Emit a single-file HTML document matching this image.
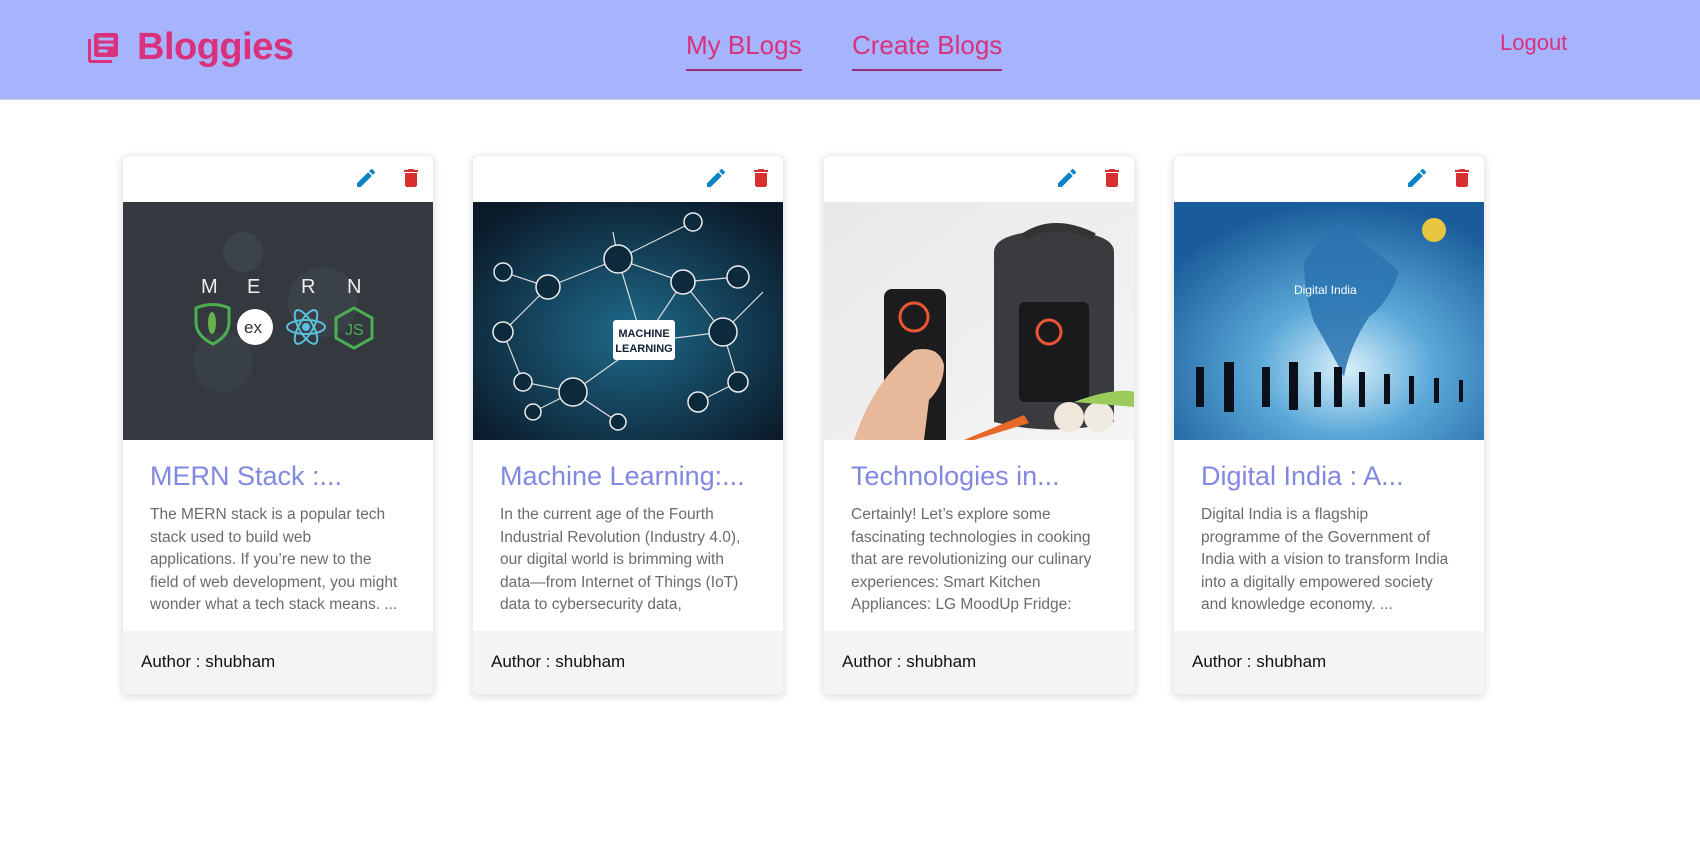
<!DOCTYPE html>
<html><head><meta charset="utf-8"><style>
*{box-sizing:border-box;margin:0;padding:0}
body{width:1700px;height:857px;background:#fff;font-family:"Liberation Sans",sans-serif;position:relative;overflow:hidden}
.hdr{position:absolute;left:0;top:0;width:1700px;height:100px;background:#a5b4fc;border-bottom:1px solid #c9cfe8}
.logo{position:absolute;left:85px;top:30px}
.brand{position:absolute;left:137px;top:26px;font-size:38px;font-weight:bold;color:#d9317d;letter-spacing:-0.5px}
.nav{position:absolute;top:30px;font-size:26px;color:#d9317d;padding-bottom:8px;border-bottom:2px solid #9b2e7a}
.logout{position:absolute;left:1500px;top:30px;font-size:22px;color:#d9317d}
.card{position:absolute;top:155px;width:312px;height:540px;border-radius:6px;background:#fff;box-shadow:0 2px 8px rgba(0,0,0,.15);border:1px solid #eee;overflow:hidden}
.icons{height:42px;position:relative}
.img{position:absolute;top:46px;left:0;width:312px;height:238px;overflow:hidden}
.title{position:absolute;left:27px;top:305px;font-size:27px;color:#8088e0;white-space:nowrap}
.body{position:absolute;left:27px;top:348px;width:248px;font-size:15.5px;line-height:22.5px;color:#6b6b6b;height:112px;overflow:hidden}
.foot{position:absolute;left:0;top:475px;width:312px;height:65px;background:#f3f4f6;font-size:17px;color:#111;padding:21px 0 0 18px}
</style></head><body>
<div class="hdr">
<svg class="logo" width="36" height="36" viewBox="0 0 24 24" fill="#d9317d"><path d="M4 6H2v14c0 1.1.9 2 2 2h14v-2H4V6zm16-4H8c-1.1 0-2 .9-2 2v12c0 1.1.9 2 2 2h12c1.1 0 2-.9 2-2V4c0-1.1-.9-2-2-2zm-1 9H9V9h10v2zm-4 4H9v-2h6v2zm4-8H9V5h10v2z"/></svg>
<div class="brand">Bloggies</div>
<div class="nav" style="left:686px">My BLogs</div>
<div class="nav" style="left:852px">Create Blogs</div>
<div class="logout">Logout</div>
</div>

<div class="card" style="left:122px">
<div class="icons"><svg style="position:absolute;left:231px;top:10px" width="24" height="24" viewBox="0 0 24 24" fill="#0b84c6"><path d="M3 17.25V21h3.75L17.81 9.94l-3.75-3.75L3 17.25zM20.71 7.04a1 1 0 000-1.41l-2.34-2.34a1 1 0 00-1.41 0l-1.83 1.83 3.75 3.75 1.83-1.83z"/></svg><svg style="position:absolute;left:276px;top:10px" width="24" height="24" viewBox="0 0 24 24" fill="#d63031"><path d="M6 19c0 1.1.9 2 2 2h8c1.1 0 2-.9 2-2V7H6v12zM19 4h-3.5l-1-1h-5l-1 1H5v2h14V4z"/></svg></div>
<div class="img"><svg width="312" height="238"><rect width="312" height="238" fill="#33393f"/><circle cx="120" cy="50" r="20" fill="#3c434a"/><circle cx="200" cy="100" r="35" fill="#3a4148"/><circle cx="100" cy="160" r="30" fill="#383f46"/>
<text x="78" y="91" fill="#eee" font-size="20" font-family="Liberation Sans">M</text><text x="124" y="91" fill="#eee" font-size="20" font-family="Liberation Sans">E</text><text x="178" y="91" fill="#eee" font-size="20" font-family="Liberation Sans">R</text><text x="224" y="91" fill="#eee" font-size="20" font-family="Liberation Sans">N</text>
<path d="M73 106 q17-7 33 0 v14 q0 14-16 22 q-17-8-17-22z" fill="none" stroke="#4caf50" stroke-width="3"/><ellipse cx="89" cy="121" rx="4" ry="11" fill="#6ab04c"/>
<circle cx="132" cy="125" r="18" fill="#fff"/><text x="121" y="131" font-size="17" fill="#333" font-family="Liberation Sans">ex</text>
<g fill="none" stroke="#5bc0de" stroke-width="2"><ellipse cx="183" cy="125" rx="19" ry="7"/><ellipse cx="183" cy="125" rx="19" ry="7" transform="rotate(60 183 125)"/><ellipse cx="183" cy="125" rx="19" ry="7" transform="rotate(-60 183 125)"/></g><circle cx="183" cy="125" r="4" fill="#5bc0de"/>
<path d="M231 106 l18 10 v20 l-18 10 l-18-10 v-20z" fill="none" stroke="#4caf50" stroke-width="3"/><text x="222" y="133" font-size="16" fill="#4caf50" font-family="Liberation Sans">JS</text></svg></div>
<div class="title">MERN Stack :...</div>
<div class="body">The MERN stack is a popular tech stack used to build web applications. If you’re new to the field of web development, you might wonder what a tech stack means. ...</div>
<div class="foot">Author : shubham</div>
</div>

<div class="card" style="left:472px">
<div class="icons"><svg style="position:absolute;left:231px;top:10px" width="24" height="24" viewBox="0 0 24 24" fill="#0b84c6"><path d="M3 17.25V21h3.75L17.81 9.94l-3.75-3.75L3 17.25zM20.71 7.04a1 1 0 000-1.41l-2.34-2.34a1 1 0 00-1.41 0l-1.83 1.83 3.75 3.75 1.83-1.83z"/></svg><svg style="position:absolute;left:276px;top:10px" width="24" height="24" viewBox="0 0 24 24" fill="#d63031"><path d="M6 19c0 1.1.9 2 2 2h8c1.1 0 2-.9 2-2V7H6v12zM19 4h-3.5l-1-1h-5l-1 1H5v2h14V4z"/></svg></div>
<div class="img"><svg width="312" height="238"><defs><radialGradient id="g2" cx="50%" cy="55%" r="65%"><stop offset="0" stop-color="#1e6a8a"/><stop offset="1" stop-color="#0b1a2a"/></radialGradient></defs><rect width="312" height="238" fill="url(#g2)"/>
<g stroke="#ddd" stroke-width="1.2" fill="none"><path d="M30 70 L75 85 L145 57 L220 20 M75 85 L30 130 L50 180 L100 190 L145 220 M145 57 L140 30 M145 57 L210 80 L265 75 M210 80 L250 130 L290 90 M100 190 L170 140 L210 80 M170 140 L250 130 L265 180 L225 200 M100 190 L60 210 M145 57 L170 140"/></g>
<g fill="#0d2a3d" stroke="#eee" stroke-width="1.5"><circle cx="30" cy="70" r="9"/><circle cx="75" cy="85" r="12"/><circle cx="145" cy="57" r="14"/><circle cx="220" cy="20" r="9"/><circle cx="210" cy="80" r="12"/><circle cx="265" cy="75" r="11"/><circle cx="30" cy="130" r="10"/><circle cx="50" cy="180" r="9"/><circle cx="100" cy="190" r="14"/><circle cx="250" cy="130" r="14"/><circle cx="265" cy="180" r="10"/><circle cx="225" cy="200" r="10"/><circle cx="60" cy="210" r="8"/><circle cx="145" cy="220" r="8"/></g>
<rect x="140" y="118" width="62" height="40" rx="3" fill="#fff"/><text x="171" y="135" text-anchor="middle" font-size="11" font-weight="bold" fill="#123" font-family="Liberation Sans">MACHINE</text><text x="171" y="150" text-anchor="middle" font-size="11" font-weight="bold" fill="#123" font-family="Liberation Sans">LEARNING</text></svg></div>
<div class="title">Machine Learning:...</div>
<div class="body">In the current age of the Fourth Industrial Revolution (Industry 4.0), our digital world is brimming with data—from Internet of Things (IoT) data to cybersecurity data, busines...</div>
<div class="foot">Author : shubham</div>
</div>

<div class="card" style="left:823px">
<div class="icons"><svg style="position:absolute;left:231px;top:10px" width="24" height="24" viewBox="0 0 24 24" fill="#0b84c6"><path d="M3 17.25V21h3.75L17.81 9.94l-3.75-3.75L3 17.25zM20.71 7.04a1 1 0 000-1.41l-2.34-2.34a1 1 0 00-1.41 0l-1.83 1.83 3.75 3.75 1.83-1.83z"/></svg><svg style="position:absolute;left:276px;top:10px" width="24" height="24" viewBox="0 0 24 24" fill="#d63031"><path d="M6 19c0 1.1.9 2 2 2h8c1.1 0 2-.9 2-2V7H6v12zM19 4h-3.5l-1-1h-5l-1 1H5v2h14V4z"/></svg></div>
<div class="img"><svg width="312" height="238"><defs><linearGradient id="g3" x1="0" y1="0" x2="1" y2="1"><stop offset="0" stop-color="#e8e8e8"/><stop offset="1" stop-color="#f5f5f5"/></linearGradient></defs><rect width="312" height="238" fill="url(#g3)"/>
<path d="M170 50 q0-20 60-22 q60 2 60 22 v170 q-60 15-120 0z" fill="#3a3b3e"/><path d="M200 35 q30-20 70 0" stroke="#333" stroke-width="8" fill="none"/><rect x="195" y="100" width="70" height="100" rx="6" fill="#1a1a1c"/><circle cx="225" cy="130" r="12" fill="none" stroke="#e53" stroke-width="3"/>
<rect x="60" y="87" width="62" height="182" rx="8" fill="#1c1c1e"/><circle cx="90" cy="115" r="14" fill="none" stroke="#e53" stroke-width="3"/>
<path d="M30 238 q20-60 60-90 q25-5 30 15 q0 20-15 35 l-5 40z" fill="#e8b89a"/>
<path d="M140 238 l60-25 l5 8 l-55 17z" fill="#e8682a"/><circle cx="245" cy="215" r="15" fill="#efe8da"/><circle cx="275" cy="215" r="15" fill="#f0ebe0"/><path d="M250 200 q40-15 62-10 v15z" fill="#9acb5b"/></svg></div>
<div class="title">Technologies in...</div>
<div class="body">Certainly! Let’s explore some fascinating technologies in cooking that are revolutionizing our culinary experiences: Smart Kitchen Appliances: LG MoodUp Fridge: LG...</div>
<div class="foot">Author : shubham</div>
</div>

<div class="card" style="left:1173px">
<div class="icons"><svg style="position:absolute;left:231px;top:10px" width="24" height="24" viewBox="0 0 24 24" fill="#0b84c6"><path d="M3 17.25V21h3.75L17.81 9.94l-3.75-3.75L3 17.25zM20.71 7.04a1 1 0 000-1.41l-2.34-2.34a1 1 0 00-1.41 0l-1.83 1.83 3.75 3.75 1.83-1.83z"/></svg><svg style="position:absolute;left:276px;top:10px" width="24" height="24" viewBox="0 0 24 24" fill="#d63031"><path d="M6 19c0 1.1.9 2 2 2h8c1.1 0 2-.9 2-2V7H6v12zM19 4h-3.5l-1-1h-5l-1 1H5v2h14V4z"/></svg></div>
<div class="img"><svg width="312" height="238"><defs><radialGradient id="g4" cx="55%" cy="70%" r="70%"><stop offset="0" stop-color="#d8f0fb"/><stop offset=".4" stop-color="#5aa8d8"/><stop offset="1" stop-color="#1a5c9a"/></radialGradient></defs><rect width="312" height="238" fill="url(#g4)"/>
<path d="M130 60 q20-30 40-40 l15 20 q20 10 40 30 q-10 30-30 45 q-20 30-25 60 q-15-30-30-55 q-10-30-10-60z" fill="#2a73b0" opacity=".85"/>
<text x="120" y="92" font-size="12" fill="#fff" font-family="Liberation Sans">Digital India</text>
<g fill="#0a0f1a"><rect x="22" y="165" width="8" height="40"/><rect x="50" y="160" width="10" height="50"/><rect x="88" y="165" width="8" height="40"/><rect x="115" y="160" width="9" height="48"/><rect x="140" y="170" width="7" height="35"/><rect x="160" y="165" width="8" height="40"/><rect x="185" y="170" width="6" height="35"/><rect x="210" y="172" width="6" height="30"/><rect x="235" y="174" width="5" height="28"/><rect x="260" y="176" width="5" height="25"/><rect x="285" y="178" width="4" height="22"/></g>
<circle cx="260" cy="28" r="12" fill="#e8c640"/></svg></div>
<div class="title">Digital India : A...</div>
<div class="body">Digital India is a flagship programme of the Government of India with a vision to transform India into a digitally empowered society and knowledge economy. ...</div>
<div class="foot">Author : shubham</div>
</div>
</body></html>
